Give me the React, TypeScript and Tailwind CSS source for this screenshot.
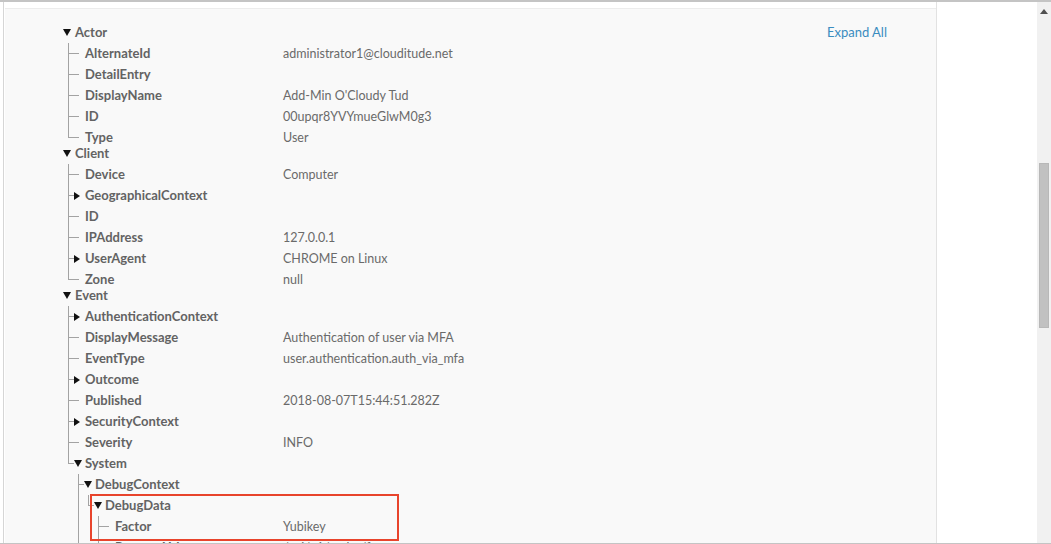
import React from 'react';

type TreeNode = {
  label: string;
  value?: string;
  state?: 'open' | 'closed';
  children?: TreeNode[];
  mark?: boolean;
};

const tree: TreeNode[] = [
  {
    label: 'Actor',
    state: 'open',
    children: [
      { label: 'AlternateId', value: 'administrator1@clouditude.net' },
      { label: 'DetailEntry' },
      { label: 'DisplayName', value: "Add-Min O'Cloudy Tud" },
      { label: 'ID', value: '00upqr8YVYmueGlwM0g3' },
      { label: 'Type', value: 'User' }
    ]
  },
  {
    label: 'Client',
    state: 'open',
    children: [
      { label: 'Device', value: 'Computer' },
      { label: 'GeographicalContext', state: 'closed' },
      { label: 'ID' },
      { label: 'IPAddress', value: '127.0.0.1' },
      { label: 'UserAgent', state: 'closed', value: 'CHROME on Linux' },
      { label: 'Zone', value: 'null' }
    ]
  },
  {
    label: 'Event',
    state: 'open',
    children: [
      { label: 'AuthenticationContext', state: 'closed' },
      { label: 'DisplayMessage', value: 'Authentication of user via MFA' },
      { label: 'EventType', value: 'user.authentication.auth_via_mfa' },
      { label: 'Outcome', state: 'closed' },
      { label: 'Published', value: '2018-08-07T15:44:51.282Z' },
      { label: 'SecurityContext', state: 'closed' },
      { label: 'Severity', value: 'INFO' },
      {
        label: 'System',
        state: 'open',
        children: [
          {
            label: 'DebugContext',
            state: 'open',
            children: [
              {
                label: 'DebugData',
                state: 'open',
                mark: true,
                children: [
                  { label: 'Factor', value: 'Yubikey' },
                  { label: 'RequestUri', value: '/api/v1/authn/factors' }
                ]
              }
            ]
          },
          { label: 'Transaction', state: 'closed' }
        ]
      }
    ]
  }
];

const lineColor = 'bg-[#a3a3a3]';

const Arrow = ({ state }: { state: 'open' | 'closed' }) =>
  state === 'open' ? (
    <svg width="8" height="7" viewBox="0 0 8 7" className="block">
      <polygon points="0,0 8,0 4,7" fill="#111" />
    </svg>
  ) : (
    <svg width="6" height="8" viewBox="0 0 6 8" className="block">
      <polygon points="0,0 6,4 0,8" fill="#111" />
    </svg>
  );

interface RowProps {
  node: TreeNode;
  depth: number;
  guides: boolean[];
  last: boolean;
}

const Row: React.FC<RowProps> = ({ node, depth, guides, last }) => {
  const header = depth === 0;
  return (
    <div className={`flex ${header ? 'h-4' : 'h-[21px]'}`}>
      <div className="flex w-[220px] shrink-0">
        {guides.map((g, i) => (
          <div key={i} className="relative w-[10px] shrink-0">
            {g && <div className={`absolute left-[5px] top-0 h-full w-px ${lineColor}`} />}
          </div>
        ))}
        {!header && (
          <div className="relative w-[10px] shrink-0">
            <div className={`absolute left-[5px] top-0 w-px ${last ? 'h-[11px]' : 'h-full'} ${lineColor}`} />
            <div className={`absolute left-[5px] top-[10px] h-px w-[5px] ${lineColor}`} />
          </div>
        )}
        <div className={`flex w-[12px] shrink-0 ${header ? 'items-start pt-[2px]' : 'items-center'}`}>
          {node.state ? (
            <div className="flex items-center">
              {!header && <div className={`h-px w-px ${lineColor}`} />}
              <Arrow state={node.state} />
            </div>
          ) : (
            <div className={`h-px w-[6px] ${lineColor}`} />
          )}
        </div>
        <span
          className={`whitespace-nowrap font-bold text-[13px] text-[#636363] ${
            header ? 'leading-[11px]' : 'leading-[21px]'
          }`}
        >
          {node.label}
        </span>
      </div>
      {node.value && (
        <span className="whitespace-nowrap text-[12.5px] leading-[21px] text-[#6a6a6a]">{node.value}</span>
      )}
    </div>
  );
};

const renderNodes = (nodes: TreeNode[], depth: number, guides: boolean[]): React.ReactNode[] =>
  nodes.map((node, i) => {
    const last = i === nodes.length - 1;
    const childGuides = depth === 0 ? [] : [...guides, !last];
    const body = (
      <>
        <Row node={node} depth={depth} guides={guides} last={last} />
        {node.state === 'open' && node.children && renderNodes(node.children, depth + 1, childGuides)}
      </>
    );
    if (node.mark) {
      return (
        <div key={node.label} className="relative">
          {body}
          <div className="pointer-events-none absolute left-[27px] top-[-1px] h-[47px] w-[309px] border-2 border-[#e8442c]" />
        </div>
      );
    }
    return <React.Fragment key={node.label}>{body}</React.Fragment>;
  });

export default function App() {
  return (
    <div
      className="flex h-[544px] overflow-hidden border-t-2 border-b border-[#c4c4c4] bg-white"
      style={{ fontFamily: 'Lato, "Liberation Sans", sans-serif' }}
    >
      <div className="w-[3px] shrink-0 bg-white" />
      <div className="w-px shrink-0 bg-[#d6d6d6]" />
      <div className="w-px shrink-0 bg-white" />

      <div className="flex w-[932px] shrink-0 flex-col border-r border-[#e2e2e2]">
        <div className="h-[7px] shrink-0 border-b border-[#ececec] bg-white" />
        <div className="flex flex-1 bg-[#f9f9f9] pl-[58px] pr-[49px] pt-[18px]">
          <div className="flex-1">{renderNodes(tree, 0, [])}</div>
          <a className="mt-[-3px] h-4 text-[13px] leading-4 text-[#3a8cc0]">Expand All</a>
        </div>
      </div>

      <div className="flex-1 bg-white" />

      <div className="flex w-[14px] shrink-0 flex-col items-center bg-[#f1f1f1]">
        <svg width="8" height="5" viewBox="0 0 8 5" className="mt-[7px]">
          <polygon points="4,0 8,5 0,5" fill="#505050" />
        </svg>
        <div className="mt-[149px] h-[165px] w-[10px] border border-[#b8b8b8] bg-[#c1c1c1]" />
      </div>
    </div>
  );
}
